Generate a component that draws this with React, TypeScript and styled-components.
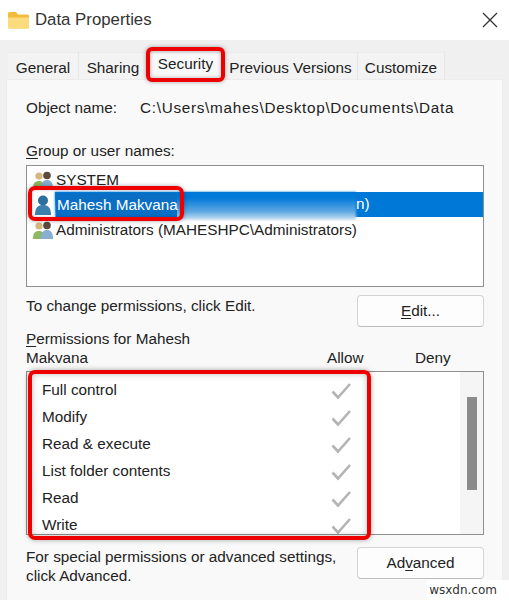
import styled, { createGlobalStyle } from 'styled-components'

const Global = createGlobalStyle`
  html, body { margin: 0; padding: 0; background: #f0f0f0; }
  * { box-sizing: border-box; }
  #root { width: 509px; height: 600px; overflow: hidden; }
`

const Dialog = styled.div`
  width: 509px; height: 600px; position: relative; overflow: hidden;
  display: flex; flex-direction: column;
  background: #f0f0f0; color: #222;
  font-family: "Liberation Sans", Arial, sans-serif; font-size: 15.3px;
`

const TitleBar = styled.div`
  height: 40px; flex-shrink: 0; background: #fff;
  display: flex; align-items: center; padding: 0 11px 0 8px;
`
const TitleText = styled.div`font-size: 16.8px; margin-left: 6px; color: #333; flex: 1;`

const TabRow = styled.div`
  height: 27px; margin-top: 12px; padding-left: 8px; flex-shrink: 0;
  display: flex; align-items: stretch;
`
const Tab = styled.div<{ $w: number; $active?: boolean }>`
  width: ${p => p.$w}px; position: relative;
  display: flex; align-items: center; justify-content: center;
  background: ${p => (p.$active ? '#f9f9f9' : '#f3f3f3')};
  border-top: 1px solid #ececec; border-right: 1px solid #e6e6e6;
  padding-top: ${p => (p.$active ? '0' : '3px')};
  padding-bottom: ${p => (p.$active ? '4px' : '0')};
  z-index: ${p => (p.$active ? 2 : 1)};
  white-space: nowrap;
`
const TabRing = styled.div`
  position: absolute; left: -2px; right: -2px; top: -6px; bottom: -3px;
  border: 4px solid #ee0000; border-radius: 6px;
  box-shadow: 0 0 4px rgba(0,0,0,.35), inset 0 0 4px rgba(0,0,0,.3);
`

const Panel = styled.div`
  flex: 1; margin: 0 6px; padding: 18px 18px 0 19px;
  background: #f9f9f9; border: 1px solid #ececec; border-bottom: 0;
  display: flex; flex-direction: column;
`

const ObjectRow = styled.div`display: flex; height: 19px; align-items: center;`
const ObjectLabel = styled.div`width: 114px;`
const ObjectPath = styled.div`letter-spacing: 0.7px;`
const Label = styled.div`line-height: 19px;`
const Hot = styled.span`text-decoration: underline; text-underline-offset: 2px; text-decoration-thickness: 1px;`

const GroupLabel = styled(Label)`margin-top: 24px;`

const ListBox = styled.div`
  margin-top: 5px; height: 122px; position: relative;
  background: #fff; border: 1px solid #8f8f8f; padding: 1px 0 0 0;
  display: flex; flex-direction: column;
`
const UserRow = styled.div`
  height: 25px; display: flex; align-items: center; padding-left: 5px; position: relative;
  white-space: nowrap;
`
const UserIcon = styled.svg`width: 22px; height: 22px; flex-shrink: 0; margin-right: 2px;`
const SelectedBar = styled.div`
  position: absolute; left: 28px; right: 0; top: 0; bottom: 0;
  background: #0078d7; color: #fff; padding-left: 1px;
  display: flex; align-items: center;
`
const Smear = styled.div`
  position: absolute; left: 0; width: 301px; top: 0; bottom: -3px;
  background: linear-gradient(180deg, #0078d7 20%, #5ea8e2 70%, #cfe3f3 100%);
  filter: blur(1px);
`
const NameHighlight = styled.div`
  position: relative; background: #0a6fc4; padding: 3px 0 3px 1px;
  line-height: 18px; height: 24px; width: 121px;
`
const Tail = styled.div`position: absolute; left: 301px; top: 3px; line-height: 18px;`
const NameRing = styled.div`
  position: absolute; left: 1px; top: 20px; width: 156px; height: 35px;
  border: 4px solid #ee0000; border-radius: 7px;
  box-shadow: 0 0 4px rgba(0,0,0,.35), inset 0 0 3px rgba(0,0,0,.25);
`

const EditRow = styled.div`display: flex; justify-content: space-between; margin-top: 8px; height: 32px;`
const EditText = styled(Label)`margin-top: 1px;`
const Btn = styled.div`
  width: 127px; height: 32px; background: #fdfdfd;
  border: 1px solid #d4d4d4; border-bottom-color: #bdbdbd; border-radius: 4px;
  display: flex; align-items: center; justify-content: center;
`

const PermHeader = styled.div`margin-top: 2px; display: grid; grid-template-columns: 301px 35px 53px 36px;`
const PermTitle = styled.div`line-height: 19px;`
const ColHead = styled.div`align-self: end; line-height: 19px;`
const ColGap = styled.div``

const PermBox = styled.div`
  margin-top: 4px; height: 164px; position: relative; overflow: hidden;
  background: #fff; border: 1px solid #8f8f8f;
  display: flex;
`
const PermList = styled.div`flex: 1; padding: 4px 0 0 15px; display: flex; flex-direction: column;`
const PermRow = styled.div`
  height: 27px; flex-shrink: 0; display: flex; align-items: center; padding-right: 108px;
  justify-content: space-between;
`
const Check = styled.svg`width: 22px; height: 18px; flex-shrink: 0; margin-top: 3px;`
const ScrollTrack = styled.div`
  width: 23px; background: #f5f5f5; flex-shrink: 0; padding: 25px 6px 0 7px;
`
const ScrollThumb = styled.div`height: 93px; width: 10px; background: #8b8b8b;`
const PermRing = styled.div`
  position: absolute; left: 28px; top: 370px; width: 343px; height: 170px;
  border: 4px solid #ee0000; border-radius: 7px;
  box-shadow: 0 0 5px rgba(0,0,0,.35), inset 0 0 6px rgba(0,0,0,.25);
`

const Footer = styled.div`margin-top: 12px; display: flex; justify-content: space-between; position: relative;`
const FooterText = styled.div`line-height: 19px;`

const Watermark = styled.div`
  position: absolute; right: 0; bottom: 0; width: 82px; height: 20px; padding: 3px 12px 0 0;
  background: #fff; color: #333; font-size: 12px; text-align: right;
  font-family: "DejaVu Sans", sans-serif;
`

const Folder = () => (
  <svg width="21" height="18" viewBox="0 0 21 18">
    <path d="M0 2.5A1.5 1.5 0 0 1 1.500 1H8l2 2.500H19.500A1.500 1.500 0 0 1 21 5V16a1.500 1.500 0 0 1-1.500 1.500H1.500A1.500 1.500 0 0 1 0 16Z" fill="#f2bd3f" />
    <path d="M0 6.500H21V16a1.500 1.500 0 0 1-1.500 1.500H1.500A1.500 1.500 0 0 1 0 16Z" fill="#fbdc7c" />
  </svg>
)

const CloseIcon = () => (
  <svg width="16" height="16" viewBox="0 0 16 16">
    <path d="M1 1L15 15M15 1L1 15" stroke="#333" strokeWidth="1.300" fill="none" />
  </svg>
)

const GroupIcon = () => (
  <UserIcon viewBox="0 0 22 22">
    <circle cx="7" cy="7" r="3.600" fill="#d3b77f" />
    <path d="M1 20c0-6 2-8 6-8s5 2 5 8Z" fill="#8fb863" />
    <circle cx="15" cy="6.500" r="3.800" fill="#5c4a3c" />
    <path d="M9 20c0-7 2.500-9 6-9s6 2 6 9Z" fill="#88aed2" />
  </UserIcon>
)

const PersonIcon = () => (
  <UserIcon viewBox="0 0 22 22">
    <circle cx="11" cy="6.500" r="5" fill="#2d6f9c" />
    <path d="M3 21c0-8 3.500-10 8-10s8 2 8 10Z" fill="#3a80ad" />
  </UserIcon>
)

const Tick = () => (
  <Check viewBox="0 0 22 18">
    <path d="M2.500 9.500L8 15.500L20 2" stroke="#b4b4b4" strokeWidth="2.600" fill="none" />
  </Check>
)

const perms = ['Full control', 'Modify', 'Read & execute', 'List folder contents', 'Read', 'Write']

export default function App() {
  return (
    <>
      <Global />
      <Dialog>
        <TitleBar>
          <Folder />
          <TitleText>Data Properties</TitleText>
          <CloseIcon />
        </TitleBar>

        <TabRow>
          <Tab $w={71}>General</Tab>
          <Tab $w={69}>Sharing</Tab>
          <Tab $w={76} $active>Security<TabRing /></Tab>
          <Tab $w={134}>Previous Versions</Tab>
          <Tab $w={87}>Customize</Tab>
        </TabRow>

        <Panel>
          <ObjectRow>
            <ObjectLabel>Object name:</ObjectLabel>
            <ObjectPath>C:\Users\mahes\Desktop\Documents\Data</ObjectPath>
          </ObjectRow>

          <GroupLabel><Hot>G</Hot>roup or user names:</GroupLabel>
          <ListBox>
            <UserRow><GroupIcon />SYSTEM</UserRow>
            <UserRow>
              <PersonIcon />
              <SelectedBar>
                <Smear />
                <NameHighlight>Mahesh Makvana</NameHighlight>
                <Tail>n)</Tail>
              </SelectedBar>
            </UserRow>
            <UserRow><GroupIcon />Administrators (MAHESHPC\Administrators)</UserRow>
            <NameRing />
          </ListBox>

          <EditRow>
            <EditText>To change permissions, click Edit.</EditText>
            <Btn><Hot>E</Hot>dit...</Btn>
          </EditRow>

          <PermHeader>
            <PermTitle><Hot>P</Hot>ermissions for Mahesh<br />Makvana</PermTitle>
            <ColHead>Allow</ColHead>
            <ColGap />
            <ColHead>Deny</ColHead>
          </PermHeader>
          <PermBox>
            <PermList>
              {perms.map(p => (
                <PermRow key={p}>{p}<Tick /></PermRow>
              ))}
            </PermList>
            <ScrollTrack><ScrollThumb /></ScrollTrack>
          </PermBox>

          <Footer>
            <FooterText>For special permissions or advanced settings,<br />click Advanced.</FooterText>
            <Btn>Ad<Hot>v</Hot>anced</Btn>
          </Footer>
        </Panel>

        <PermRing />
        <Watermark>wsxdn.com</Watermark>
      </Dialog>
    </>
  )
}
